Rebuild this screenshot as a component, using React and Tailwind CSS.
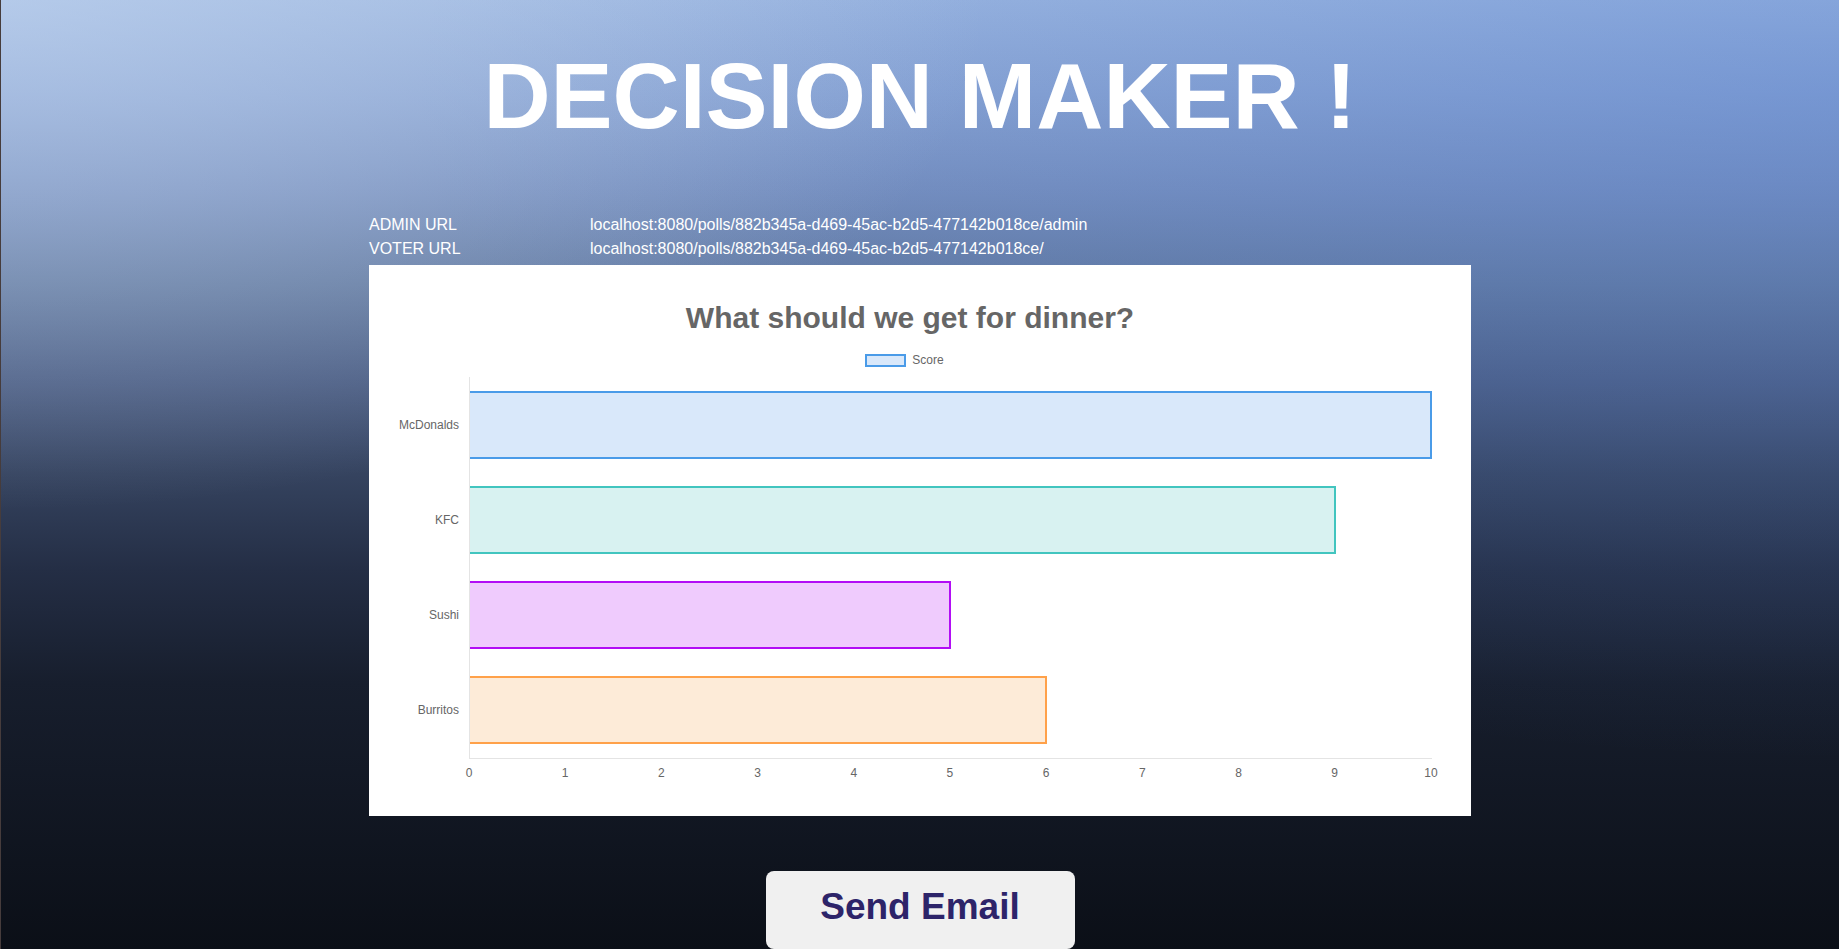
const links = [
  { label: 'ADMIN URL', url: 'localhost:8080/polls/882b345a-d469-45ac-b2d5-477142b018ce/admin' },
  { label: 'VOTER URL', url: 'localhost:8080/polls/882b345a-d469-45ac-b2d5-477142b018ce/' },
];

const options = [
  { name: 'McDonalds', score: 10, fill: 'bg-[#d9e8fa]', line: 'border-[#4a9be8]' },
  { name: 'KFC', score: 9, fill: 'bg-[#d8f2f1]', line: 'border-[#42c5bf]' },
  { name: 'Sushi', score: 5, fill: 'bg-[#efcbfd]', line: 'border-[#b20ef5]' },
  { name: 'Burritos', score: 6, fill: 'bg-[#fdebd8]', line: 'border-[#ffa14a]' },
];

const ticks = [0, 1, 2, 3, 4, 5, 6, 7, 8, 9, 10];

function Chart() {
  return (
    <div className="mx-auto mt-[4px] h-[551px] w-[1102px] bg-white text-[#666]">
      <div className="ml-[20px] w-[1042px] pt-[38px]">
        <h2 className="text-center text-[30px] font-bold leading-[30px]">What should we get for dinner?</h2>
        <div className="mt-[21px] flex h-[13px] items-center justify-center gap-[6px] pr-[11px]">
          <span className="h-[13px] w-[41px] border-2 border-[#4a9be8] bg-[#d9e8fa]" />
          <span className="text-[12px] leading-[13px]">Score</span>
        </div>
      </div>

      <div className="mt-[10px] flex text-[12px]">
        <div className="flex w-[100px] flex-col">
          {options.map((o) => (
            <div key={o.name} className="flex h-[95.25px] items-center justify-end pr-[10px] leading-[14px]">
              {o.name}
            </div>
          ))}
        </div>
        <div>
          <div className="flex h-[382px] w-[963px] flex-col border-b border-l border-[#e4e4e4]">
            {options.map((o) => (
              <div key={o.name} className="flex h-[95.25px] items-center">
                <div
                  className={`h-[68px] border-y-2 border-r-2 ${o.fill} ${o.line}`}
                  style={{ width: `${o.score * 10}%` }}
                />
              </div>
            ))}
          </div>
          <div className="mt-[7px] flex w-[962px] justify-between leading-[14px]">
            {ticks.map((t) => (
              <div key={t} className="flex w-0 justify-center">
                <span>{t}</span>
              </div>
            ))}
          </div>
        </div>
      </div>
    </div>
  );
}

export default function App() {
  return (
    <div className="min-h-screen border-l border-[#463c3c] bg-[image:radial-gradient(ellipse_at_0%_0%,rgba(200,218,242,0.55),transparent_38%),radial-gradient(ellipse_at_100%_10%,rgba(80,125,210,0.35),transparent_55%),linear-gradient(180deg,#9cb6df_0%,#8aa4d2_10%,#778fbd_20%,#62799f_30%,#4b5d83_40%,#35435f_50%,#242e45_60%,#171e2d_72%,#0b0f17_100%)] font-['Liberation_Sans',Arial,sans-serif]">
      <h1 className="mt-0 pt-[43px] text-center text-[93px] font-bold leading-[107px] text-white">DECISION MAKER !</h1>

      <div className="mx-auto mt-[62px] grid w-[1102px] grid-cols-[221px_1fr] pt-[1px] text-[16px] leading-[24px] text-white">
        {links.map((l) => (
          <div key={l.label} className="contents">
            <div>{l.label}</div>
            <div>{l.url}</div>
          </div>
        ))}
      </div>

      <Chart />

      <button className="mx-auto mt-[55px] flex h-[78px] w-[309px] justify-center rounded-[8px] bg-[#f0f0f0] pt-[15px] text-[37px] font-bold leading-[41px] text-[#2d2469]">
        Send Email
      </button>
    </div>
  );
}
